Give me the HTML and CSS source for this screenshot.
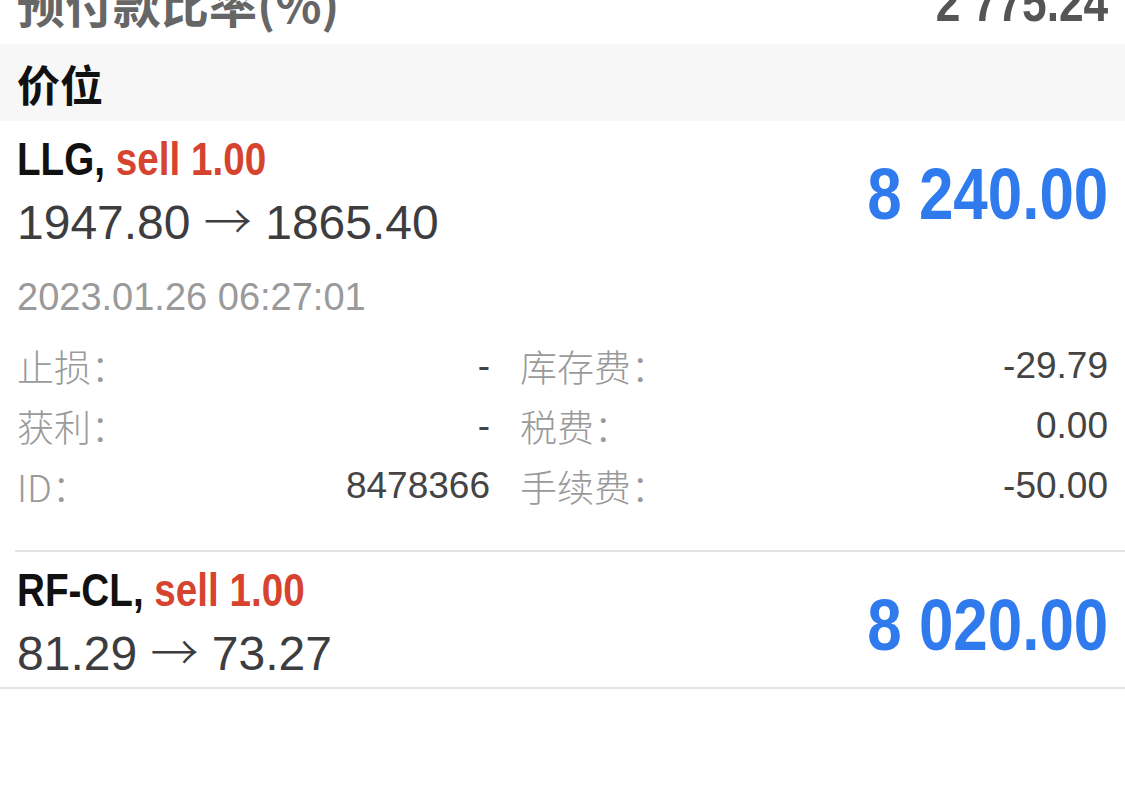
FILE: index.html
```html
<!DOCTYPE html>
<html lang="zh">
    <head>
        <meta charset="utf-8">
        <title>交易</title>
        <link rel="stylesheet" href="styles.css">
    </head>
    <body>
        <main class="page">
            <div class="summary-row">
                <span class="summary-label">预付款比率(%)</span>
                <span class="summary-value">2 775.24</span>
            </div>

            <div class="section-title">价位</div>

            <ul class="positions">
                <li class="position">
                    <div class="pos-head">
                        <div class="pos-main">
                            <div class="pos-title"><span class="narrow">LLG, <span class="side">sell 1.00</span></span></div>
                            <div class="pos-prices">1947.80 <span class="arrow">→</span> 1865.40</div>
                        </div>
                        <div class="pos-profit"><span class="narrow">8 240.00</span></div>
                    </div>
                    <div class="pos-time">2023.01.26 06:27:01</div>
                    <div class="pos-details">
                        <div class="detail"><span class="detail-label">止损：</span><span class="detail-value">-</span></div>
                        <div class="detail"><span class="detail-label">库存费：</span><span class="detail-value">-29.79</span></div>
                        <div class="detail"><span class="detail-label">获利：</span><span class="detail-value">-</span></div>
                        <div class="detail"><span class="detail-label">税费：</span><span class="detail-value">0.00</span></div>
                        <div class="detail"><span class="detail-label">ID：</span><span class="detail-value">8478366</span></div>
                        <div class="detail"><span class="detail-label">手续费：</span><span class="detail-value">-50.00</span></div>
                    </div>
                </li>
                <li class="position">
                    <div class="pos-head">
                        <div class="pos-main">
                            <div class="pos-title"><span class="narrow">RF-CL, <span class="side">sell 1.00</span></span></div>
                            <div class="pos-prices">81.29 <span class="arrow">→</span> 73.27</div>
                        </div>
                        <div class="pos-profit"><span class="narrow">8 020.00</span></div>
                    </div>
                </li>
            </ul>
        </main>
    </body>
</html>
```

FILE: styles.css
```css
body {
    margin: 0;
    background-color: #ffffff;
    font-family: "Liberation Sans", "Noto Sans CJK SC", sans-serif;
    overflow: hidden;
}

.page {
    margin-top: -40px;
}

/* no condensed face installed, so squeeze the bold figures */
.narrow {
    display: inline-block;
    transform: scaleX(0.84);
    transform-origin: left center;
    white-space: nowrap;
}

/* scrolled-off account summary row */
.summary-row {
    height: 84px;
    padding: 0 17px;
    display: flex;
    align-items: center;
    justify-content: space-between;
}

.summary-label {
    font-family: "Noto Sans CJK SC", sans-serif;
    font-size: 48px;
    font-weight: bold;
    color: #666666;
}

.summary-value {
    display: inline-block;
    transform: scaleX(0.82);
    transform-origin: right center;
    font-size: 54px;
    font-weight: bold;
    color: #555555;
}

.section-title {
    height: 77px;
    padding: 0 17px;
    display: flex;
    align-items: center;
    background-color: #f7f7f7;
    font-family: "Noto Sans CJK SC", sans-serif;
    font-size: 43px;
    font-weight: bold;
    color: #111111;
}

.positions {
    list-style: none;
    margin: 0;
    padding: 0;
}

.position {
    margin-left: 15px;
    padding: 12px 17px 5px 2px;
    border-bottom: 2px solid #e2e2e2;
}

.position:first-child {
    padding-bottom: 34px;
}

.position:last-child {
    margin-left: 0;
    padding-left: 17px;
}

.pos-head {
    display: flex;
    align-items: center;
    justify-content: space-between;
}

.pos-title {
    font-size: 46px;
    line-height: 52px;
    font-weight: bold;
    color: #111111;
}

.side {
    color: #d6432f;
}

.pos-prices {
    margin-top: 10px;
    font-size: 48px;
    line-height: 56px;
    color: #3d3d3f;
}

.arrow {
    font-family: "Noto Sans CJK SC", sans-serif;
    font-weight: 300;
    line-height: 0;
}

.pos-profit {
    margin-top: 4px;
    font-size: 72px;
    font-weight: bold;
    color: #2f7bee;
}

.pos-profit .narrow {
    transform: scaleX(0.86);
    transform-origin: right center;
}

.pos-time {
    margin-top: 16px;
    font-size: 38px;
    line-height: 60px;
    color: #9a9a9a;
}

.pos-details {
    margin-top: 9px;
    display: grid;
    grid-template-columns: 473px 1fr;
    column-gap: 30px;
}

.detail {
    height: 60px;
    display: flex;
    align-items: center;
    justify-content: space-between;
    font-size: 37px;
}

.detail-label {
    font-family: "Noto Sans CJK SC", sans-serif;
    font-weight: 300;
    color: #9a9a9a;
}

.detail-value {
    color: #444444;
}
```
